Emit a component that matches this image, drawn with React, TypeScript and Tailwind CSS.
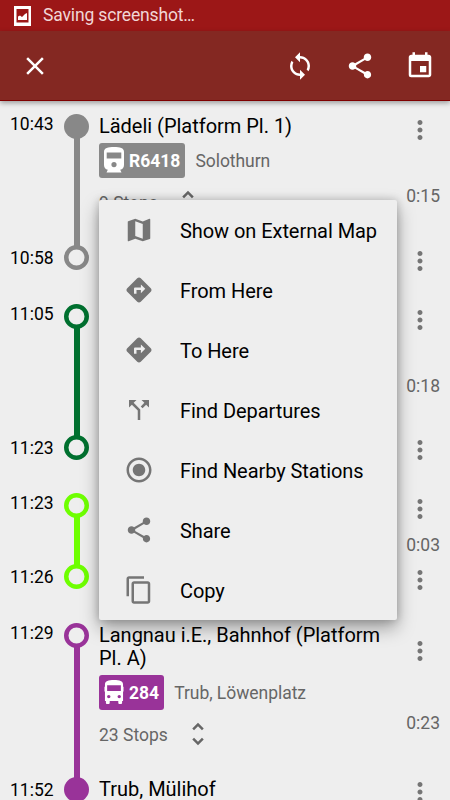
import type { IconType } from "react-icons";
import {
  MdCallSplit,
  MdClose,
  MdContentCopy,
  MdDirections,
  MdEvent,
  MdMap,
  MdMoreVert,
  MdRadioButtonChecked,
  MdShare,
  MdSync,
  MdUnfoldMore,
} from "react-icons/md";

type Leg = {
  depart: string;
  arrive: string;
  duration: string;
  color: string;
  height: string;
  menuHeight?: string;
  startFilled?: boolean;
  endFilled?: boolean;
  title?: string;
  line?: string;
  vehicle?: "train" | "bus";
  direction?: string;
  stops?: string;
  endTitle?: string;
};

const legs: Leg[] = [
  {
    depart: "10:43",
    arrive: "10:58",
    duration: "0:15",
    color: "#888888",
    height: "h-[156px]",
    startFilled: true,
    title: "Lädeli (Platform Pl. 1)",
    line: "R6418",
    vehicle: "train",
    direction: "Solothurn",
    stops: "9 Stops",
  },
  { depart: "11:05", arrive: "11:23", duration: "0:18", color: "#00702f", height: "h-[156px]" },
  { depart: "11:23", arrive: "11:26", duration: "0:03", color: "#6eff00", height: "h-[96px]" },
  {
    depart: "11:29",
    arrive: "11:52",
    duration: "0:23",
    color: "#993399",
    height: "h-[179px]",
    menuHeight: "h-14 mb-[-15px]",
    endFilled: true,
    title: "Langnau i.E., Bahnhof (Platform Pl. A)",
    line: "284",
    vehicle: "bus",
    direction: "Trub, Löwenplatz",
    stops: "23 Stops",
    endTitle: "Trub, Mülihof",
  },
];

const menuItems: { label: string; icon: IconType }[] = [
  { label: "Show on External Map", icon: MdMap },
  { label: "From Here", icon: MdDirections },
  { label: "To Here", icon: MdDirections },
  { label: "Find Departures", icon: MdCallSplit },
  { label: "Find Nearby Stations", icon: MdRadioButtonChecked },
  { label: "Share", icon: MdShare },
  { label: "Copy", icon: MdContentCopy },
];

function Node({ filled, color }: { filled?: boolean; color: string }) {
  return (
    <svg width="25" height="25" viewBox="0 0 25 25" className="shrink-0">
      {filled ? (
        <circle cx="12.5" cy="12.5" r="12.5" fill={color} />
      ) : (
        <circle cx="12.5" cy="12.5" r="10.25" fill="none" stroke={color} strokeWidth="4.5" />
      )}
    </svg>
  );
}

function VehicleIcon({ type }: { type: "train" | "bus" }) {
  if (type === "train") {
    return (
      <svg width="20" height="26" viewBox="0 0 20 26" fill="#fff">
        <path
          fillRule="evenodd"
          d="M10 0C4 0 0 .8 0 5v13c0 2.500 1.500 4.300 3.800 4.700L2.500 25.500h15l-1.300-2.800C18.500 22.300 20 20.500 20 18V5c0-4.200-4-5-10-5zM2.700 5.500h14.600v6H2.700zM10 15a2.600 2.600 0 1 1 0 5.200 2.600 2.600 0 0 1 0-5.200z"
        />
      </svg>
    );
  }
  return (
    <svg width="20" height="25" viewBox="0 0 21 26" fill="#fff">
      <path
        fillRule="evenodd"
        d="M10.500 0C4.500 0 1 1 1 4.500v2.500H.5v5H1v10h1v1.800c0 1 .5 1.400 1.500 1.400h1c1 0 1.500-.4 1.500-1.400V22h9v1.800c0 1 .5 1.400 1.500 1.400h1c1 0 1.500-.4 1.500-1.400V22h1V12h.5V7H20V4.500C20 1 16.500 0 10.500 0zM3.300 5.500h14.400v6H3.300zM5 15.500a1.800 1.800 0 1 1 0 3.600 1.800 1.800 0 0 1 0-3.600zM16 15.500a1.800 1.800 0 1 1 0 3.600 1.800 1.800 0 0 1 0-3.600z"
      />
    </svg>
  );
}

function LegRow({ leg }: { leg: Leg }) {
  return (
    <div className={`flex shrink-0 px-2.5 ${leg.height}`}>
      <div className="flex w-[54px] flex-col justify-between pb-[2px] text-[17.5px] leading-5 text-black">
        <span>{leg.depart}</span>
        <span>{leg.arrive}</span>
      </div>

      <div className="flex w-[25px] flex-col items-center">
        <Node filled={leg.startFilled} color={leg.color} />
        <div className="-my-px w-1.5 flex-1" style={{ backgroundColor: leg.color }} />
        <Node filled={leg.endFilled} color={leg.color} />
      </div>

      <div className="ml-2.5 flex flex-1 flex-col">
        {leg.title && (
          <div className="w-[290px] pt-px text-xl leading-[23.5px] tracking-[-0.02px] text-black">{leg.title}</div>
        )}
        {leg.vehicle && (
          <div className="mt-[4.4px] flex items-center">
            <div
              className="flex h-[35px] items-center gap-[5px] rounded-[3px] px-[5px]"
              style={{ backgroundColor: leg.color }}
            >
              <VehicleIcon type={leg.vehicle} />
              <span className="pt-px text-[17.5px] font-bold text-white">{leg.line}</span>
            </div>
            <span className="ml-2.5 pt-0.5 text-[17.5px] tracking-[-0.04px] text-[#666]">{leg.direction}</span>
          </div>
        )}
        {leg.stops && (
          <div className="mt-[9.6px] flex h-[30px] items-center gap-[15px] text-[17.5px] text-[#666]">
            <span className="pt-0.5">{leg.stops}</span>
            <MdUnfoldMore size={30} />
          </div>
        )}
        {leg.endTitle && <div className="mt-auto text-xl leading-[23.5px] text-black">{leg.endTitle}</div>}
      </div>

      <div className="flex w-10 flex-col items-end justify-between">
        <div className={`flex items-center pr-[5px] ${leg.menuHeight ?? "h-8 mb-[-5px]"}`}>
          <MdMoreVert size={30} className="text-[#757575]" />
        </div>
        <span className="text-[17.5px] leading-5 text-[#666]">{leg.duration}</span>
        <div className="flex h-[19px] items-center pr-[5px]">
          <MdMoreVert size={30} className="text-[#757575]" />
        </div>
      </div>
    </div>
  );
}

export default function App() {
  return (
    <div className="relative flex h-[800px] w-[450px] flex-col overflow-hidden bg-[#eeeeee] font-[Roboto,sans-serif]">
      {/* Status bar */}
      <div className="flex h-[31px] shrink-0 items-center bg-[#9c1717] pl-3.5 text-[#f1d6d6]">
        <svg width="17" height="20" viewBox="0 0 17 20">
          <path fill="#fff" fillRule="evenodd" d="M0 0h17v20H0zM2.500 3v13.500h12V3z" />
          <path fill="#fff" d="M4 14v-3.500l2-1 2 1.500 3-3 2-1V14z" />
        </svg>
        <span className="ml-3 text-[17.5px] tracking-[-0.15px]">Saving screenshot…</span>
      </div>

      {/* App bar */}
      <header className="z-10 flex h-[70px] shrink-0 items-center gap-[30px] border-b border-[#7f0000] bg-[#842822] px-[5px] text-white shadow-[0_2px_5px_rgba(0,0,0,0.35)]">
        <MdClose size={30} className="ml-[15px] mr-auto" />
        <MdSync size={30} />
        <MdShare size={30} />
        <MdEvent size={30} className="mr-2.5" />
      </header>

      {/* Trip legs */}
      <main className="flex flex-col gap-[33.5px] pt-[13px]">
        {legs.map((leg) => (
          <LegRow key={leg.depart} leg={leg} />
        ))}
      </main>

      {/* Stop menu */}
      <div className="absolute left-[99px] top-[200px] z-20 w-[298px] rounded-[2px] bg-[#eeeeee] shadow-[0_8px_18px_rgba(0,0,0,0.35),0_0_8px_rgba(0,0,0,0.2)]">
        {menuItems.map(({ label, icon: Icon }) => (
          <div key={label} className="flex h-[60px] items-center pl-[25px] text-xl tracking-[-0.06px] text-black">
            <Icon size={30} className="mr-[26px] text-[#757575]" />
            <span className="pt-px">{label}</span>
          </div>
        ))}
      </div>
    </div>
  );
}
